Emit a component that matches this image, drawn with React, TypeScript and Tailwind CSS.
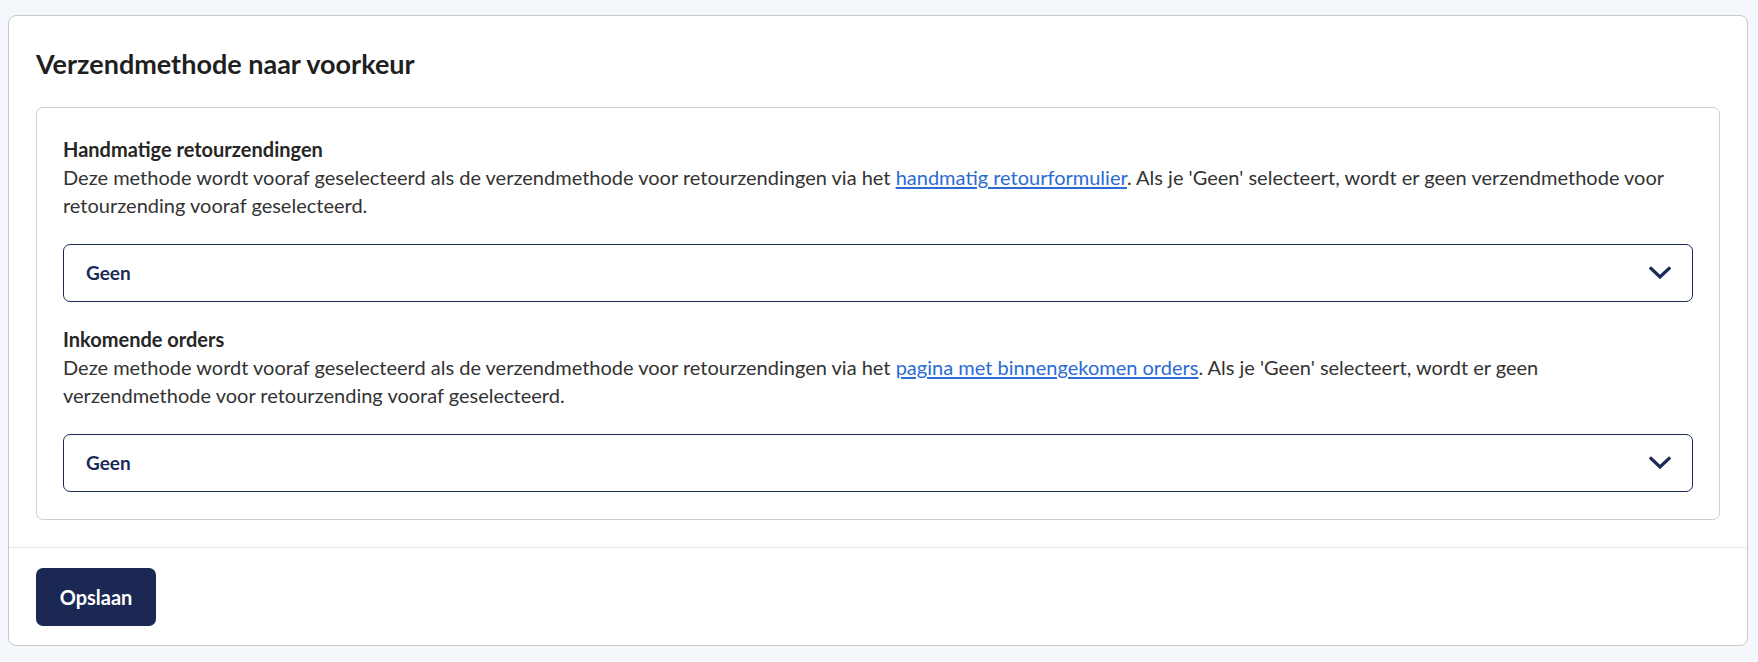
import React from 'react';

const Chevron = () => (
  <svg width="22" height="14" viewBox="0 0 22 14" fill="none" className="shrink-0">
    <path d="M2 2.5 L11 11 L20 2.5" stroke="#1b2a58" strokeWidth="3.2" strokeLinecap="square" strokeLinejoin="miter" />
  </svg>
);

const MethodSelect = ({ value }: { value: string }) => (
  <div className="mt-[25px] flex h-[58px] items-center justify-between rounded-[7px] border border-[#1b2a58] bg-white pl-[22px] pr-[21px]">
    <span className="text-[19px] font-bold text-[#1b2a58]">{value}</span>
    <Chevron />
  </div>
);

const Section = ({ title, children }: { title: string; children: React.ReactNode }) => (
  <div>
    <div className="text-[20px] font-bold leading-[28px] text-[#262626]">{title}</div>
    <p className="text-[20px] leading-[28px] text-[#333333]">{children}</p>
    <MethodSelect value="Geen" />
  </div>
);

export default function App() {
  return (
    <div className="min-h-screen bg-[#f4f8fc] pl-2 pr-[10px] pt-[15px] font-['Lato',sans-serif]">
      <div className="rounded-[8px] border border-[#c9c9c9] bg-white">
        <div className="px-[27px] pt-[30px] pb-[27px]">
          <h2 className="text-[27px] font-bold leading-[36px] text-[#1f1f1f]">Verzendmethode naar voorkeur</h2>

          <div className="mt-[25px] flex flex-col gap-[23px] rounded-[7px] border border-[#cfcfcf] px-[26px] pt-[27px] pb-[27px]">
            <Section title="Handmatige retourzendingen">
              Deze methode wordt vooraf geselecteerd als de verzendmethode voor retourzendingen via het{' '}
              <a href="#" className="text-[#2a6bd4] underline underline-offset-2">handmatig retourformulier</a>. Als je 'Geen' selecteert, wordt er geen verzendmethode voor
              <br />
              retourzending vooraf geselecteerd.
            </Section>
            <Section title="Inkomende orders">
              Deze methode wordt vooraf geselecteerd als de verzendmethode voor retourzendingen via het{' '}
              <a href="#" className="text-[#2a6bd4] underline underline-offset-2">pagina met binnengekomen orders</a>. Als je 'Geen' selecteert, wordt er geen
              <br />
              verzendmethode voor retourzending vooraf geselecteerd.
            </Section>
          </div>
        </div>

        <div className="border-t border-[#e6e6e6] px-[27px] pt-[20px] pb-[19px]">
          <button className="h-[58px] w-[120px] rounded-[7px] bg-[#1a2853] text-[20px] font-bold text-white">Opslaan</button>
        </div>
      </div>
    </div>
  );
}
